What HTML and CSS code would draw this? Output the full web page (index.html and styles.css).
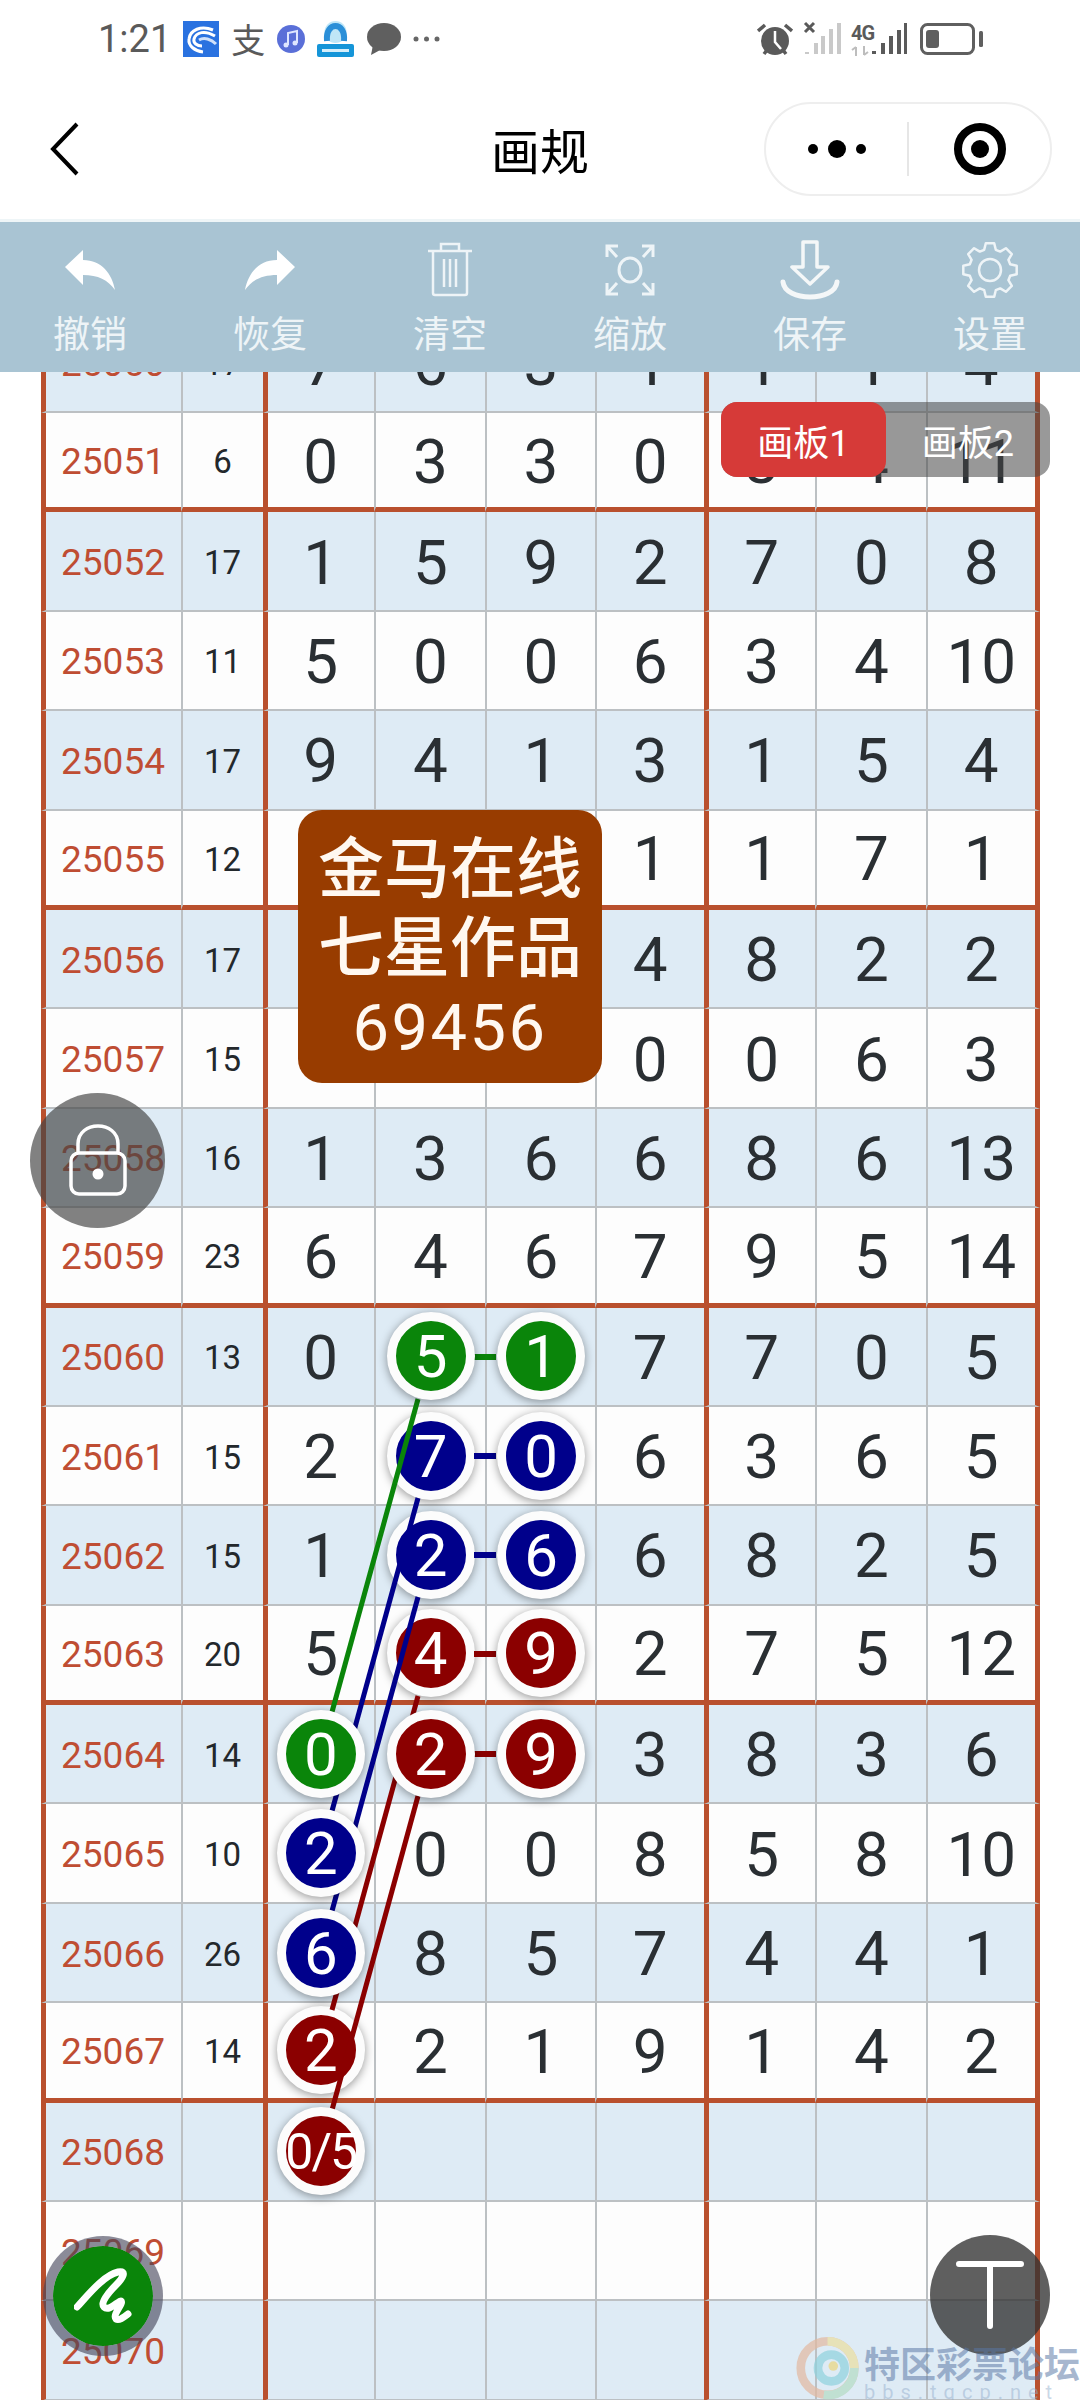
FILE: index.html
```html
<!DOCTYPE html>
<html lang="zh-CN">
<head>
    <meta charset="UTF-8">
    <meta name="viewport" content="width=device-width, initial-scale=1.0">
    <title>画规</title>
    <link rel="stylesheet" href="styles.css">
</head>
<body>
    <div class="status">
        <div class="status-left">
            <span class="time">1:21</span>
            <svg width="36" height="36" viewBox="0 0 36 36"><rect width="36" height="36" fill="#2a72e0"/><path d="M30 9C18 4 7 9 6 18c-1 7 6 12 14 13" fill="none" stroke="#fff" stroke-width="3"/><path d="M32 15C22 9 13 11 11 18c-1 4 3 7 8 7" fill="none" stroke="#fff" stroke-width="3"/><path d="M16 19c5-3 12-1 17 4" fill="none" stroke="#cfe0fa" stroke-width="3"/></svg>
            <span class="zhi">支</span>
            <svg width="28" height="30" viewBox="0 0 28 30"><circle cx="14" cy="15" r="14" fill="#5a6fd8"/><path d="M11 21V9l9-2v12" fill="none" stroke="#dfe6ff" stroke-width="2"/><circle cx="9" cy="21" r="2.5" fill="#dfe6ff"/><circle cx="18" cy="19" r="2.5" fill="#dfe6ff"/></svg>
            <svg width="37" height="36" viewBox="0 0 37 36"><circle cx="18.500" cy="11" r="11" fill="#bfe6f7"/><path d="M10 20C8 0 29 0 27 20" fill="none" stroke="#2b8fd8" stroke-width="6"/><rect y="23" width="37" height="13" rx="2" fill="#1595d8"/><rect x="5" y="28" width="27" height="3" fill="#d5eefa"/></svg>
            <svg width="35" height="32" viewBox="0 0 35 32"><ellipse cx="18" cy="14" rx="17" ry="14" fill="#5f5f5f"/><path d="M7 22L5 32 16 26z" fill="#5f5f5f"/></svg>
            <svg width="27" height="6" viewBox="0 0 27 6"><circle cx="3" cy="3" r="2.5" fill="#666"/><circle cx="13.500" cy="3" r="2.5" fill="#666"/><circle cx="24" cy="3" r="2.5" fill="#666"/></svg>
        </div>
        <div class="status-right">
            <svg width="36" height="36" viewBox="0 0 36 36"><circle cx="18" cy="20" r="14" fill="#5a5a5a"/><path d="M18 10v11l6 7" fill="none" stroke="#fff" stroke-width="2.500"/><path d="M1 10l7-6M35 10l-7-6M7 33l3-4M29 33l-3-4" stroke="#5a5a5a" stroke-width="3.500"/></svg>
            <svg width="38" height="36" viewBox="0 0 38 36"><path d="M2 2l9 9M11 2l-9 9" stroke="#5a5a5a" stroke-width="3"/><path d="M4 33v-2M13 33V22M20 33V15M28 33V8M36 33V2" stroke="#c9c9c9" stroke-width="4"/></svg>
            <span class="sim">
                <span class="sim-tag">
                    <span class="sim-label">4G</span>
                    <svg width="18" height="10" viewBox="0 0 18 10"><path d="M5 10V1M1 4l4-3M13 0v9M17 6l-4 3" fill="none" stroke="#bdbdbd" stroke-width="2"/></svg>
                </span>
                <svg width="36" height="34" viewBox="0 0 36 34"><path d="M3 32v-3M12 32V21M20 32V14M28 32V8M35 32V1" stroke="#5a5a5a" stroke-width="4"/></svg>
            </span>
            <svg width="63" height="32" viewBox="0 0 63 32"><rect x="1.500" y="1.500" width="52" height="29" rx="6" fill="none" stroke="#5f5f5f" stroke-width="3"/><rect x="6" y="7" width="13" height="18" rx="3" fill="#5f5f5f"/><rect x="59" y="8" width="4" height="16" rx="1.500" fill="#5f5f5f"/></svg>
        </div>
    </div>

    <div class="nav">
        <svg class="back" width="30" height="54" viewBox="0 0 30 54"><path d="M27 2L3 27l24 25" fill="none" stroke="#000" stroke-width="4"/></svg>
        <div class="title">画规</div>
        <div class="capsule">
            <div class="capsule-part">
                <svg width="60" height="20" viewBox="0 0 60 20"><circle cx="6" cy="10" r="5" fill="#000"/><circle cx="30" cy="10" r="9" fill="#000"/><circle cx="54" cy="10" r="5" fill="#000"/></svg>
            </div>
            <div class="capsule-part capsule-right">
                <svg width="54" height="54" viewBox="0 0 54 54"><circle cx="27" cy="27" r="22" fill="none" stroke="#000" stroke-width="8"/><circle cx="27" cy="27" r="9" fill="#000"/></svg>
            </div>
        </div>
    </div>

    <div class="toolbar">
        <div class="tool">
            <svg width="60" height="60" viewBox="0 0 60 60"><path d="M5 27L23 10V20C42 20 52 34 55 50 48 40 38 35 23 35V45Z" fill="#fff"/></svg>
            <span>撤销</span>
        </div>
        <div class="tool">
            <svg width="60" height="60" viewBox="0 0 60 60"><path d="M55 27L37 10V20C18 20 8 34 5 50 12 40 22 35 37 35V45Z" fill="#fff"/></svg>
            <span>恢复</span>
        </div>
        <div class="tool">
            <svg width="60" height="60" viewBox="0 0 60 60" fill="none" stroke="#eef4f7" stroke-width="2.500"><path d="M8 11H52M21 11V4H39V11M13 11V53a2 2 0 0 0 2 2H45a2 2 0 0 0 2-2V11M24 19V47M30 19V47M36 19V47"/></svg>
            <span>清空</span>
        </div>
        <div class="tool">
            <svg width="60" height="60" viewBox="0 0 60 60" fill="none" stroke="#eef4f7" stroke-width="3"><ellipse cx="30" cy="30" rx="11" ry="12"/><path d="M7 17V6H18M7 6L17 17M53 17V6H42M53 6L43 17M7 43V54H18M7 54L17 43M53 43V54H42M53 54L43 43"/></svg>
            <span>缩放</span>
        </div>
        <div class="tool">
            <svg width="60" height="60" viewBox="0 0 60 60" fill="none" stroke="#f4f7f8"><path d="M23 2H37V27H48L30 44 12 27H23Z" stroke-width="3.500" stroke-linejoin="round"/><path d="M3 42C5 62 55 62 57 42" stroke-width="5" stroke-linecap="round"/></svg>
            <span>保存</span>
        </div>
        <div class="tool">
            <svg width="60" height="60" viewBox="0 0 60 60" fill="none" stroke="#eef4f7" stroke-width="2.500" stroke-linejoin="round"><polygon points="24.2,9.8 25.8,3.3 34.2,3.3 35.8,9.8 40.2,11.6 45.9,8.2 51.8,14.1 48.4,19.8 50.2,24.2 56.7,25.8 56.7,34.2 50.2,35.8 48.4,40.2 51.8,45.9 45.9,51.8 40.2,48.4 35.8,50.2 34.2,56.7 25.8,56.7 24.2,50.2 19.8,48.4 14.1,51.8 8.2,45.9 11.6,40.2 9.8,35.8 3.3,34.2 3.3,25.8 9.8,24.2 11.6,19.8 8.2,14.1 14.1,8.2 19.8,11.6"/><circle cx="30" cy="30" r="11"/></svg>
            <span>设置</span>
        </div>
    </div>

    <div class="board">
        <div class="sheet">
            <div class="row"><div class="period">25050</div><div class="sum">17</div><div class="num gap">7</div><div class="num">6</div><div class="num">3</div><div class="num">1</div><div class="num gap">1</div><div class="num">1</div><div class="num last">4</div></div>
            <div class="row end"><div class="period">25051</div><div class="sum">6</div><div class="num gap">0</div><div class="num">3</div><div class="num">3</div><div class="num">0</div><div class="num gap">3</div><div class="num">4</div><div class="num last">11</div></div>

            <div class="row"><div class="period">25052</div><div class="sum">17</div><div class="num gap">1</div><div class="num">5</div><div class="num">9</div><div class="num">2</div><div class="num gap">7</div><div class="num">0</div><div class="num last">8</div></div>
            <div class="row"><div class="period">25053</div><div class="sum">11</div><div class="num gap">5</div><div class="num">0</div><div class="num">0</div><div class="num">6</div><div class="num gap">3</div><div class="num">4</div><div class="num last">10</div></div>
            <div class="row"><div class="period">25054</div><div class="sum">17</div><div class="num gap">9</div><div class="num">4</div><div class="num">1</div><div class="num">3</div><div class="num gap">1</div><div class="num">5</div><div class="num last">4</div></div>
            <div class="row end"><div class="period">25055</div><div class="sum">12</div><div class="num gap">4</div><div class="num">3</div><div class="num">4</div><div class="num">1</div><div class="num gap">1</div><div class="num">7</div><div class="num last">1</div></div>

            <div class="row"><div class="period">25056</div><div class="sum">17</div><div class="num gap">3</div><div class="num">7</div><div class="num">3</div><div class="num">4</div><div class="num gap">8</div><div class="num">2</div><div class="num last">2</div></div>
            <div class="row"><div class="period">25057</div><div class="sum">15</div><div class="num gap">5</div><div class="num">6</div><div class="num">4</div><div class="num">0</div><div class="num gap">0</div><div class="num">6</div><div class="num last">3</div></div>
            <div class="row"><div class="period">25058</div><div class="sum">16</div><div class="num gap">1</div><div class="num">3</div><div class="num">6</div><div class="num">6</div><div class="num gap">8</div><div class="num">6</div><div class="num last">13</div></div>
            <div class="row end"><div class="period">25059</div><div class="sum">23</div><div class="num gap">6</div><div class="num">4</div><div class="num">6</div><div class="num">7</div><div class="num gap">9</div><div class="num">5</div><div class="num last">14</div></div>

            <div class="row"><div class="period">25060</div><div class="sum">13</div><div class="num gap">0</div><div class="num"><span class="ball green front">5</span></div><div class="num"><span class="ball green front">1</span></div><div class="num">7</div><div class="num gap">7</div><div class="num">0</div><div class="num last">5</div></div>
            <div class="row"><div class="period">25061</div><div class="sum">15</div><div class="num gap">2</div><div class="num"><span class="ball navy">7</span></div><div class="num"><span class="ball navy front">0</span></div><div class="num">6</div><div class="num gap">3</div><div class="num">6</div><div class="num last">5</div></div>
            <div class="row"><div class="period">25062</div><div class="sum">15</div><div class="num gap">1</div><div class="num"><span class="ball navy">2</span></div><div class="num"><span class="ball navy front">6</span></div><div class="num">6</div><div class="num gap">8</div><div class="num">2</div><div class="num last">5</div></div>
            <div class="row end"><div class="period">25063</div><div class="sum">20</div><div class="num gap">5</div><div class="num"><span class="ball maroon">4</span></div><div class="num"><span class="ball maroon front">9</span></div><div class="num">2</div><div class="num gap">7</div><div class="num">5</div><div class="num last">12</div></div>

            <div class="row"><div class="period">25064</div><div class="sum">14</div><div class="num gap"><span class="ball green front">0</span></div><div class="num"><span class="ball maroon front">2</span></div><div class="num"><span class="ball maroon front">9</span></div><div class="num">3</div><div class="num gap">8</div><div class="num">3</div><div class="num last">6</div></div>
            <div class="row"><div class="period">25065</div><div class="sum">10</div><div class="num gap"><span class="ball navy front">2</span></div><div class="num">0</div><div class="num">0</div><div class="num">8</div><div class="num gap">5</div><div class="num">8</div><div class="num last">10</div></div>
            <div class="row"><div class="period">25066</div><div class="sum">26</div><div class="num gap"><span class="ball navy front">6</span></div><div class="num">8</div><div class="num">5</div><div class="num">7</div><div class="num gap">4</div><div class="num">4</div><div class="num last">1</div></div>
            <div class="row end"><div class="period">25067</div><div class="sum">14</div><div class="num gap"><span class="ball maroon">2</span></div><div class="num">2</div><div class="num">1</div><div class="num">9</div><div class="num gap">1</div><div class="num">4</div><div class="num last">2</div></div>

            <div class="row"><div class="period">25068</div><div class="sum"></div><div class="num gap"><span class="ball maroon front split">0/5</span></div><div class="num"></div><div class="num"></div><div class="num"></div><div class="num gap"></div><div class="num"></div><div class="num last"></div></div>
            <div class="row"><div class="period">25069</div><div class="sum"></div><div class="num gap"></div><div class="num"></div><div class="num"></div><div class="num"></div><div class="num gap"></div><div class="num"></div><div class="num last"></div></div>
            <div class="row"><div class="period">25070</div><div class="sum"></div><div class="num gap"></div><div class="num"></div><div class="num"></div><div class="num"></div><div class="num gap"></div><div class="num"></div><div class="num last"></div></div>
        </div>

        <!-- lines joining the balls, in board coordinates -->
        <svg class="links" width="1080" height="2028" viewBox="0 0 1080 2028" stroke-width="5">
            <g stroke="#0a850a">
                <path d="M418 1027L332 1340"/>
                <path d="M474 985H496" stroke-width="6"/>
            </g>
            <g stroke="#00008b">
                <path d="M418 1126L332 1439"/>
                <path d="M418 1225L332 1539"/>
                <path d="M474 1084H496" stroke-width="6"/>
                <path d="M474 1183H496" stroke-width="6"/>
            </g>
            <g stroke="#8b0000">
                <path d="M418 1324L332 1638"/>
                <path d="M418 1424L332 1738"/>
                <path d="M474 1282H496" stroke-width="6"/>
                <path d="M474 1382H496" stroke-width="6"/>
            </g>
        </svg>

        <div class="boards">
            <div class="board-tab active">画板1</div>
            <div class="board-tab">画板2</div>
        </div>

        <div class="stamp">金马在线<br>七星作品<br><span class="stamp-no">69456</span></div>

        <div class="float-btn lock">
            <svg width="60" height="76" viewBox="0 0 60 76" fill="none" stroke="#fff" stroke-width="3.500"><path d="M10 32V22C10 -2 50 -2 50 22V32"/><rect x="3" y="31" width="54" height="41" rx="8"/><circle cx="30" cy="52" r="5.500" fill="#fff" stroke="none"/></svg>
        </div>

        <div class="float-btn pen">
            <svg width="58" height="58" viewBox="0 0 58 58" fill="none" stroke="#fff" stroke-width="7" stroke-linecap="round" stroke-linejoin="round"><path d="M3 40C14 28 30 8 44 5 54 3 48 12 42 18 34 26 26 36 30 40 35 45 44 34 47 34 50 36 38 48 42 52 45 54 50 50 54 47"/></svg>
        </div>

        <div class="float-btn text-btn">
            <svg width="70" height="70" viewBox="0 0 70 70" fill="none" stroke="#fff" stroke-width="6" stroke-linecap="round"><path d="M4 4H66M35 4V66"/></svg>
        </div>

        <div class="mark">
            <svg width="70" height="66" viewBox="0 0 70 66" fill="none" stroke-width="9"><circle cx="34" cy="33" r="28" stroke="#e3b9a0"/><path d="M34 5A28 28 0 0 1 62 33" stroke="#ecdf9f"/><path d="M62 33A28 28 0 0 1 30 61" stroke="#b4dcc4"/><circle cx="38" cy="33" r="14" stroke="#8fd2de"/><circle cx="40" cy="31" r="5" fill="#ecd67e" stroke="none"/></svg>
            <div>
                <div class="mark-name">特区彩票论坛</div>
                <div class="mark-url">bbs.tqcp.net</div>
            </div>
        </div>
    </div>
</body>
</html>
```

FILE: styles.css
```css
body {
    margin: 0;
    width: 1080px;
    height: 2400px;
    overflow: hidden;
    background-color: #ffffff;
    font-family: Roboto, "Noto Sans CJK SC", sans-serif;
}

/* status bar */
.status {
    display: flex;
    justify-content: space-between;
    align-items: center;
    height: 78px;
    padding: 0 97px 0 98px;
    color: #5a5a5a;
}

.status-left,
.status-right {
    display: flex;
    align-items: center;
    gap: 12px;
}

.status-right {
    gap: 10px;
}

.time {
    font-size: 38px;
}

.zhi {
    font-family: "Noto Sans CJK SC", sans-serif;
    font-size: 34px;
    line-height: 1;
}

.sim {
    display: flex;
    align-items: flex-end;
    margin-right: 3px;
}

.sim-tag {
    display: flex;
    flex-direction: column;
    gap: 3px;
    width: 20px;
}

.sim-label {
    font-size: 20px;
    font-weight: 700;
    line-height: 20px;
    letter-spacing: -1px;
}

/* title bar */
.nav {
    display: grid;
    grid-template-columns: 1fr auto 1fr;
    align-items: center;
    height: 144px;
    box-sizing: border-box;
    border-bottom: 3px solid #eef5f7;
}

.back {
    margin-left: 50px;
}

.title {
    font-family: "Noto Sans CJK SC", sans-serif;
    font-size: 49px;
    color: #000000;
}

.capsule {
    justify-self: end;
    display: flex;
    align-items: center;
    width: 288px;
    height: 94px;
    margin-right: 28px;
    box-sizing: border-box;
    border: 2px solid #eeeeee;
    border-radius: 47px;
}

.capsule-part {
    flex: 1;
    display: flex;
    justify-content: center;
    align-items: center;
    height: 54px;
}

.capsule-right {
    border-left: 2px solid #e6e6e6;
}

/* tool strip */
.toolbar {
    display: flex;
    height: 150px;
    background-color: #a9c4d3;
}

.tool {
    flex: 1;
    display: flex;
    flex-direction: column;
    align-items: center;
    padding-top: 18px;
    color: #eef4f7;
}

.tool span {
    margin-top: 10px;
    font-family: "Noto Sans CJK SC", sans-serif;
    font-size: 37px;
    line-height: 44px;
}

/* chart */
.board {
    position: relative;
    height: 2028px;
    overflow: hidden;
}

.sheet {
    width: 999px;
    margin: -58.4px 0 0 40.5px;
}

.row {
    display: grid;
    grid-template-columns: 140px 82px 111.5px 111px 110px 108.5px 111.5px 111px 113.5px;
    height: 99.4px;
    background-color: #fdfdfd;
}

.row:nth-child(odd) {
    background-color: #deebf5;
}

.row > div {
    display: flex;
    justify-content: center;
    align-items: center;
    padding-top: 3px;
    box-sizing: border-box;
    border-left: 2px solid #bcc0c3;
    border-bottom: 2px solid #bcc0c3;
    line-height: 1;
}

.row.end > div {
    border-bottom: 5px solid #b9502e;
}

.row > .period,
.row > .gap {
    border-left: 5px solid #b9502e;
}

.row > .last {
    border-right: 5px solid #b9502e;
}

.period {
    font-size: 37px;
    color: #bf4d33;
}

.sum {
    font-size: 33px;
    color: #23282c;
}

.num {
    font-size: 62px;
    color: #2a2f33;
}

/* balls sit in their cell, the links run between them */
.ball {
    position: relative;
    z-index: 1;
    flex: none;
    display: flex;
    justify-content: center;
    align-items: center;
    width: 88px;
    height: 88px;
    margin-top: -3px;
    padding-top: 2px;
    box-sizing: border-box;
    border: 9px solid #fcfcfc;
    border-radius: 50%;
    box-shadow: 0 2px 10px rgba(0, 0, 0, 0.4);
    font-size: 60px;
    color: #ffffff;
}

.ball.front {
    z-index: 3;
}

.ball.green {
    background-color: #0a850a;
}

.ball.navy {
    background-color: #00008b;
}

.ball.maroon {
    background-color: #8b0000;
}

.ball.split {
    font-size: 50px;
    letter-spacing: -2px;
    white-space: nowrap;
}

.links {
    position: absolute;
    top: 0;
    left: 0;
    z-index: 2;
}

/* things floating over the chart */
.boards {
    position: absolute;
    top: 30px;
    left: 721px;
    z-index: 4;
    display: flex;
    width: 329px;
    height: 75px;
    border-radius: 16px;
    background-color: rgba(70, 70, 70, 0.55);
}

.board-tab {
    flex: 1;
    display: flex;
    justify-content: center;
    align-items: center;
    border-radius: 16px;
    font-size: 36px;
    color: #ffffff;
}

.board-tab.active {
    background-color: #d63a38;
}

.stamp {
    position: absolute;
    top: 438px;
    left: 298px;
    z-index: 4;
    width: 304px;
    height: 273px;
    padding-top: 14px;
    box-sizing: border-box;
    border-radius: 24px;
    background-color: #983c00;
    font-family: "Noto Sans CJK SC", sans-serif;
    font-size: 66px;
    font-weight: 500;
    line-height: 79px;
    text-align: center;
    color: #fff8f0;
}

.stamp-no {
    font-family: Roboto, sans-serif;
    font-weight: 400;
    font-size: 65px;
    letter-spacing: 2.5px;
}

.float-btn {
    position: absolute;
    z-index: 4;
    display: flex;
    justify-content: center;
    align-items: center;
    box-sizing: border-box;
    border-radius: 50%;
}

.lock {
    top: 721px;
    left: 30px;
    width: 135px;
    height: 135px;
    background-color: rgba(70, 70, 70, 0.68);
}

.lock svg {
    margin-top: -1px;
}

.pen {
    top: 1864px;
    left: 43px;
    width: 120px;
    height: 120px;
    border: 10px solid rgba(70, 70, 90, 0.62);
    background-color: #0a850a;
    background-clip: padding-box;
}

.text-btn {
    top: 1863px;
    left: 930px;
    width: 120px;
    height: 120px;
    background-color: rgba(50, 50, 50, 0.78);
}

.mark {
    position: absolute;
    top: 1963px;
    left: 795px;
    z-index: 5;
    display: flex;
    width: 285px;
    gap: 2px;
    overflow: hidden;
    opacity: 0.7;
}

.mark-name {
    margin-top: 6px;
    font-family: "Noto Sans CJK SC", sans-serif;
    font-size: 36px;
    font-weight: 700;
    line-height: 42px;
    white-space: nowrap;
    color: rgba(90, 120, 165, 0.75);
}

.mark-url {
    font-size: 20px;
    line-height: 18px;
    letter-spacing: 7px;
    white-space: nowrap;
    color: rgba(150, 175, 205, 0.7);
}
```
